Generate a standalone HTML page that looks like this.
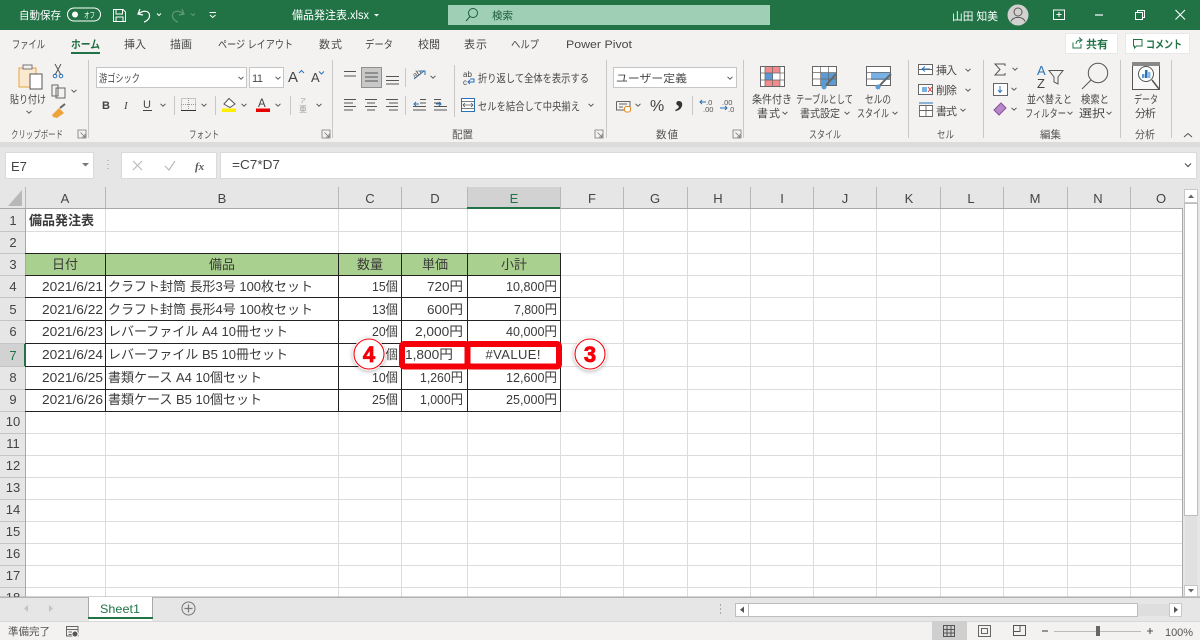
<!DOCTYPE html>
<html lang="ja"><head><meta charset="utf-8"><title>備品発注表.xlsx - Excel</title>
<style>
html,body{margin:0;padding:0;background:#e6e6e6;width:1200px;height:640px;overflow:hidden}
svg{display:block}
text{font-family:"Liberation Sans","Noto Sans CJK JP",sans-serif;fill:#444}
.t{font-size:11px;fill:#484848}
.w{font-size:11px;fill:#fff}
.g{font-size:13px;fill:#3a3a3a}
.m{text-anchor:middle}
.e{text-anchor:end}
.h{font-size:13px;fill:#444;text-anchor:middle}
.l{font-size:10.5px;fill:#555}
</style></head><body>
<svg width="1200" height="640" viewBox="0 0 1200 640" xmlns="http://www.w3.org/2000/svg">
<defs><filter id="s" x="-40%" y="-40%" width="180%" height="180%"><feDropShadow dx="0" dy="1" stdDeviation="2.2" flood-color="#000" flood-opacity=".3"/></filter>
<g id="v"><path d="M-2.500 -1.200L0 1.200L2.500 -1.200" fill="none" stroke="#555" stroke-width="1"/></g>
<g id="lau"><path d="M-4 -4H4V4H-4Z M-1.500 -1.500L3 3M3 0V3H0" fill="none" stroke="#777" stroke-width=".8"/></g>
</defs>
<rect width="1200" height="640" fill="#e6e6e6"/>
<!-- title bar -->
<rect width="1200" height="30" fill="#217346"/>
<text class="w" x="19" y="19" textLength="42" lengthAdjust="spacingAndGlyphs">自動保存</text>
<rect x="67.500" y="8" width="33" height="13" rx="6.500" fill="none" stroke="#fff"/><circle cx="75" cy="14.500" r="3" fill="#fff"/>
<text x="84" y="18" font-size="8" style="fill:#fff" textLength="11" lengthAdjust="spacingAndGlyphs">オフ</text>
<path d="M113.500 9.500H123L125.500 12V21.500H113.500ZM116 9.500V14H122.500V9.500M116 21.500V17H123V21.500" fill="none" stroke="#fff"/>
<path d="M140 9L138 14L143 15M138.500 14C143 10 149 10.500 149.500 15C150 18 147.500 21 144 22" fill="none" stroke="#fff" stroke-width="1.200"/>
<path d="M157 13.500L159 15.500L161 13.500" fill="none" stroke="#fff"/>
<path d="M182 9L184 14L179 15M183.500 14C179 10 173 10.500 172.500 15C172 18 174.500 21 178 22" fill="none" stroke="#5f9a78" stroke-width="1.200"/>
<path d="M191 13.500L193 15.500L195 13.500" fill="none" stroke="#5f9a78"/>
<path d="M209.500 12.500H216M210 15L212.700 17.500L215.500 15" fill="none" stroke="#fff"/>
<text class="w" x="292" y="19" textLength="77" lengthAdjust="spacingAndGlyphs" style="font-size:11.500px">備品発注表.xlsx</text>
<path d="M374 14L376.500 16.500L379 14Z" fill="#fff"/>
<rect x="448" y="5" width="322" height="20" fill="#9fcfb5"/>
<circle cx="473" cy="13" r="4.500" fill="none" stroke="#1c5f3a" stroke-width="1"/><path d="M470 16.500L466 21" stroke="#1c5f3a" stroke-width="1"/>
<text x="492" y="19" font-size="10.500" style="fill:#1c5f3a" textLength="21">検索</text>
<text class="w" x="952" y="20" textLength="46" lengthAdjust="spacingAndGlyphs">山田 知美</text>
<circle cx="1018" cy="15" r="10.500" fill="#d2d1cf"/>
<circle cx="1018" cy="12" r="4" fill="none" stroke="#5a5a5a"/><path d="M1011 21.500C1012.500 16 1023.500 16 1025 21.500" fill="none" stroke="#5a5a5a"/>
<path d="M1053 10H1065M1053.500 10V19.500H1064.500V10M1059 12V17M1056.500 14.500H1061.500" fill="none" stroke="#fff"/>
<path d="M1095 15H1103" stroke="#fff" stroke-width="1.200"/>
<path d="M1135.500 12.500H1142.500V19.500H1135.500ZM1137.500 12.500V10.500H1144.500V17.500H1142.500" fill="none" stroke="#fff"/>
<path d="M1175.500 10L1185 19.500M1185 10L1175.500 19.500" stroke="#fff" stroke-width="1.100"/>
<!-- ribbon -->
<rect y="30" width="1200" height="112" fill="#f3f2f1"/>
<rect y="142" width="1200" height="5" fill="#dcdcdc"/>
<text class="t" x="12" y="48" textLength="33" lengthAdjust="spacingAndGlyphs">ファイル</text>
<text class="t" x="71" y="48" textLength="29" lengthAdjust="spacingAndGlyphs" font-weight="700" style="fill:#1f6e43">ホーム</text>
<rect x="71" y="52" width="29" height="2" fill="#217346"/>
<text class="t" x="124" y="48" textLength="22">挿入</text>
<text class="t" x="170" y="48" textLength="22">描画</text>
<text class="t" x="218" y="48" textLength="75" lengthAdjust="spacingAndGlyphs">ページ レイアウト</text>
<text class="t" x="319" y="48" textLength="23">数式</text>
<text class="t" x="365" y="48" textLength="28" lengthAdjust="spacingAndGlyphs">データ</text>
<text class="t" x="418" y="48" textLength="22">校閲</text>
<text class="t" x="464" y="48" textLength="23">表示</text>
<text class="t" x="511" y="48" textLength="28" lengthAdjust="spacingAndGlyphs">ヘルプ</text>
<text class="t" x="566" y="48" textLength="66" lengthAdjust="spacingAndGlyphs">Power Pivot</text>
<rect x="1065.500" y="33.500" width="52" height="20" fill="#fff" stroke="#e8e8e8"/>
<path d="M1073 42.500V48H1081V44M1076 44C1076 41 1078 40 1081 40M1079 37.500L1082 40L1079 42.500" fill="none" stroke="#217346"/>
<text x="1086" y="48" font-size="11" font-weight="700" style="fill:#217346" textLength="22">共有</text>
<rect x="1125.500" y="33.500" width="64" height="20" fill="#fff" stroke="#e8e8e8"/>
<path d="M1133.500 39.500H1142V46H1136.500L1134.500 48V46H1133.500Z" fill="none" stroke="#217346"/>
<text x="1146" y="48" font-size="11" font-weight="700" style="fill:#217346" textLength="36" lengthAdjust="spacingAndGlyphs">コメント</text>
<!-- separators -->
<path d="M88.500 60V138M332.500 60V138M606.500 60V138M743.500 60V138M908.500 60V138M983.500 60V138M1120.500 60V138M1171.500 60V138M405.500 68V87M405.500 96V115M454.500 65V117M174.500 96V115M215.500 96V115M290.500 96V115M692.500 96V115" stroke="#c8c8c8" fill="none"/>
<!-- clipboard -->
<path d="M19 68H36V87H19Z" fill="#fbe9cf" stroke="#e8a33d"/>
<path d="M23 65H32V69H23Z" fill="#f3f2f1" stroke="#777"/><path d="M30 74H42V89H30Z" fill="#fff" stroke="#555"/>
<text class="t" x="10" y="103" textLength="36" lengthAdjust="spacingAndGlyphs">貼り付け</text><use href="#v" x="29" y="112"/>
<path d="M55 75L61 64M61 75L55 64" stroke="#555" fill="none"/><circle cx="55" cy="76" r="1.800" fill="none" stroke="#2a73b8"/><circle cx="61" cy="76" r="1.800" fill="none" stroke="#2a73b8"/>
<path d="M52 85H58V96H52ZM56 88H65V98H56Z" fill="#f3f2f1" stroke="#666"/><use href="#v" x="74" y="91"/>
<path d="M52 115L59 108L64 113L57 118L53 117Z" fill="#eda23a"/><path d="M60 108L65 104" stroke="#666" stroke-width="2"/>
<text class="l" x="11" y="138" textLength="52" lengthAdjust="spacingAndGlyphs">クリップボード</text><use href="#lau" x="82" y="134"/>
<!-- font -->
<rect x="96.500" y="67.500" width="150" height="20" fill="#fff" stroke="#c6c6c6"/>
<text class="t" x="99" y="82" textLength="41" lengthAdjust="spacingAndGlyphs">游ゴシック</text><use href="#v" x="241" y="78"/>
<rect x="249.500" y="67.500" width="34" height="20" fill="#fff" stroke="#c6c6c6"/>
<text class="t" x="252" y="82" textLength="11">11</text><use href="#v" x="278" y="78"/>
<text x="288" y="82" font-size="15" style="fill:#444">A</text><path d="M299 73L301.500 70.500L304 73" fill="none" stroke="#2a73b8"/>
<text x="311" y="82" font-size="13" style="fill:#444">A</text><path d="M319 71.500L321.500 74L324 71.500" fill="none" stroke="#2a73b8"/>
<text x="102" y="109" font-size="11" font-weight="700" style="fill:#444">B</text>
<text x="124" y="109" font-size="11" font-style="italic" style="font-family:'Liberation Serif',serif;fill:#444">I</text>
<text x="143" y="108" font-size="11" style="fill:#444">U</text><path d="M143 110.500H152" stroke="#444"/><use href="#v" x="163" y="105"/>
<path d="M181.500 98.500H195.500V110.500H181.500Z" fill="none" stroke="#999" stroke-dasharray="1 1"/><path d="M181 110.500H196" stroke="#333"/><path d="M188.500 98V110M181 104.500H196" stroke="#999" stroke-dasharray="1 1"/><use href="#v" x="204" y="105"/>
<path d="M224 104L229 98.500L235 104L230 107.500Z" fill="#fff" stroke="#555"/><rect x="222" y="108.500" width="14" height="3.500" fill="#ffee00"/><use href="#v" x="244" y="105"/>
<text x="258" y="107" font-size="11.500" style="fill:#444">A</text><rect x="256" y="108.500" width="14" height="3.500" fill="#e80000"/><use href="#v" x="278" y="105"/>
<text x="303" y="103" font-size="6" class="m" style="fill:#999">ア</text><text x="303" y="112" font-size="8" class="m" style="fill:#999">亜</text><use href="#v" x="319" y="105"/>
<text class="l" x="189" y="138" textLength="30" lengthAdjust="spacingAndGlyphs">フォント</text><use href="#lau" x="326" y="134"/>
<!-- alignment -->
<path d="M344 71.500H356M344 76H356" stroke="#555"/>
<rect x="361.500" y="67.500" width="20" height="20" fill="#c8c8c8" stroke="#8f8f8f"/><path d="M365 73H378M365 77H378M365 81H378" stroke="#555"/>
<path d="M386 76.500H399M386 80.500H399M386 84H399" stroke="#555"/>
<path d="M344 99.500H356M344 103H353M344 106.500H356M344 110H353" stroke="#555"/>
<path d="M365 99.500H377M367 103H375M365 106.500H377M367 110H375" stroke="#555"/>
<path d="M386 99.500H398M389 103H398M386 106.500H398M389 110H398" stroke="#555"/>
<path d="M414 79L424 71M420 71H425V75" fill="none" stroke="#2a73b8"/><text x="413" y="77" font-size="8" style="fill:#555" transform="rotate(-35 416 75)">ab</text><use href="#v" x="433" y="77"/>
<path d="M420 99.500H426M420 103H426M413 106.500H426M413 110H426" stroke="#555"/><path d="M419 104H414M416 102L414 104L416 106" fill="none" stroke="#2a73b8"/>
<path d="M434 99.500H441M434 103H441M434 106.500H447M434 110H447" stroke="#555"/><path d="M436 104H441M439 102L441 104L439 106" fill="none" stroke="#2a73b8"/>
<text x="463" y="77" font-size="8" style="fill:#444">ab</text><text x="463" y="85" font-size="8" style="fill:#444">c</text><path d="M468 82H474V79H470M470 84L468 82L470 80" fill="none" stroke="#2a73b8"/>
<text class="t" x="478" y="82" textLength="111" lengthAdjust="spacingAndGlyphs">折り返して全体を表示する</text>
<rect x="461.500" y="98.500" width="13" height="13" fill="#fff" stroke="#2a73b8"/><path d="M463 105H473M465 103L463 105L465 107M471 103L473 105L471 107M461 101.500H475M461 108.500H475" fill="none" stroke="#555" stroke-width=".8"/>
<text class="t" x="478" y="110" textLength="102" lengthAdjust="spacingAndGlyphs">セルを結合して中央揃え</text><use href="#v" x="591" y="105"/>
<text class="l" x="452" y="138" textLength="21">配置</text><use href="#lau" x="599" y="134"/>
<!-- number -->
<rect x="613.500" y="67.500" width="123" height="20" fill="#fff" stroke="#c6c6c6"/>
<text class="t" x="616" y="82" textLength="71" lengthAdjust="spacingAndGlyphs">ユーザー定義</text><use href="#v" x="730" y="78"/>
<path d="M616.500 101.500H630V108M616.500 101.500V110H624M619 104H627M619 107H623" fill="none" stroke="#666"/><rect x="624.500" y="106.500" width="6" height="5.500" rx="2" fill="#fff" stroke="#e08a1e"/><use href="#v" x="638" y="105"/>
<text x="650" y="111" font-size="16" style="fill:#444">%</text>
<text x="675" y="106" font-size="34" font-weight="700" style="font-family:'Liberation Serif',serif;fill:#333">,</text>
<path d="M706 102H700M702 100L700 102L702 104" fill="none" stroke="#2a73b8"/><text x="706" y="105" font-size="7.500" style="fill:#555">.0</text><text x="703" y="112" font-size="7.500" style="fill:#555">.00</text>
<text x="722" y="105" font-size="7.500" style="fill:#555">.00</text><path d="M720 108H727M725 106L727 108L725 110" fill="none" stroke="#2a73b8"/><text x="728" y="112" font-size="7.500" style="fill:#555">.0</text>
<text class="l" x="656" y="138" textLength="22">数値</text><use href="#lau" x="737" y="134"/>
<!-- styles -->
<rect x="760.500" y="66.500" width="24" height="20" fill="#fff" stroke="#666"/>
<rect x="765" y="67" width="15" height="6" fill="#f28b8b"/><rect x="765" y="73" width="8" height="7" fill="#5b9bd5"/><rect x="765" y="80" width="15" height="6" fill="#f28b8b"/>
<path d="M765 67V86M772.500 67V86M780 67V86M761 73H784M761 80H784" stroke="#666" stroke-width=".7"/>
<text class="t" x="752" y="103" textLength="40" lengthAdjust="spacingAndGlyphs">条件付き</text><text class="t" x="757" y="117" textLength="23">書式</text><use href="#v" x="785" y="113"/>
<rect x="812.500" y="66.500" width="24" height="19" fill="#fff" stroke="#666"/><rect x="821" y="73" width="15" height="12" fill="#5b9bd5"/><path d="M812 72.500H837M812 79H837M820.500 66V86M828.500 66V86" stroke="#666" stroke-width=".7"/><path d="M824 88L828 83L836 74" stroke="#666" stroke-width="2"/><circle cx="824" cy="87" r="2.500" fill="#5b9bd5"/>
<text class="t" x="796" y="103" textLength="57" lengthAdjust="spacingAndGlyphs">テーブルとして</text><text class="t" x="800" y="117" textLength="40" lengthAdjust="spacingAndGlyphs">書式設定</text><use href="#v" x="847" y="113"/>
<rect x="866.500" y="66.500" width="24" height="19" fill="#fff" stroke="#666"/><rect x="871" y="72" width="19" height="8" fill="#78b1e5"/><path d="M866 72.500H891M866 79H891" stroke="#666" stroke-width=".7"/><path d="M878 88L882 83L891 74" stroke="#666" stroke-width="2"/><circle cx="878" cy="87" r="2.500" fill="#5b9bd5"/>
<text class="t" x="865" y="103" textLength="26" lengthAdjust="spacingAndGlyphs">セルの</text><text class="t" x="857" y="117" textLength="32" lengthAdjust="spacingAndGlyphs">スタイル</text><use href="#v" x="895" y="113"/>
<text class="l" x="809" y="138" textLength="32" lengthAdjust="spacingAndGlyphs">スタイル</text>
<!-- cells -->
<path d="M918.500 64.500H932.500V74.500H918.500ZM918 69.500H933" fill="#fff" stroke="#666"/><path d="M930 69H922M925 66.500L922 69L925 71.500" fill="none" stroke="#2a73b8"/>
<text class="t" x="936" y="74" textLength="21">挿入</text><use href="#v" x="968" y="70"/>
<path d="M918.500 84.500H932.500V94.500H918.500Z" fill="#fff" stroke="#666"/><rect x="922" y="87" width="5" height="5" fill="#78b1e5"/><path d="M928 87L932 92M932 87L928 92" stroke="#d33"/>
<text class="t" x="936" y="94" textLength="21">削除</text><use href="#v" x="968" y="90"/>
<path d="M919.500 105.500H932.500V116.500H919.500ZM919 110.500H933M926 105V117" fill="#fff" stroke="#666" stroke-width=".9"/><path d="M919 103H933" stroke="#2a73b8"/>
<text class="t" x="936" y="115" textLength="21">書式</text><use href="#v" x="963" y="110"/>
<text class="l" x="937" y="138" textLength="17" lengthAdjust="spacingAndGlyphs">セル</text>
<!-- editing -->
<path d="M1005 66V64H995L1000 69.500L995 75H1005V73" fill="none" stroke="#555"/><use href="#v" x="1015" y="69"/>
<rect x="993.500" y="83.500" width="14" height="12" fill="#fff" stroke="#666"/><path d="M1000 86V92M998 90L1000 92.500L1002 90" fill="none" stroke="#2a73b8"/><use href="#v" x="1014" y="89"/>
<path d="M994 110L1001 103L1006 108L999 115Z" fill="#b788c8" stroke="#8a4da0"/><use href="#v" x="1014" y="109"/>
<text x="1037" y="75" font-size="13" style="fill:#2a73b8">A</text><text x="1037" y="88" font-size="13" style="fill:#444">Z</text>
<path d="M1049 70.500H1063L1058 77V84L1054 82V77Z" fill="none" stroke="#555"/>
<text class="t" x="1027" y="103" textLength="45" lengthAdjust="spacingAndGlyphs">並べ替えと</text><text class="t" x="1025" y="117" textLength="41" lengthAdjust="spacingAndGlyphs">フィルター</text><use href="#v" x="1070" y="113"/>
<circle cx="1098" cy="73" r="9.700" fill="none" stroke="#555"/><path d="M1091 80L1082 89" stroke="#555"/>
<text class="t" x="1081" y="103" textLength="28" lengthAdjust="spacingAndGlyphs">検索と</text><text class="t" x="1079" y="117" textLength="26" lengthAdjust="spacingAndGlyphs">選択</text><use href="#v" x="1109" y="113"/>
<text class="l" x="1040" y="138" textLength="21">編集</text>
<!-- analysis -->
<rect x="1132.500" y="62.500" width="27" height="27" fill="#f8f8f8" stroke="#555"/><rect x="1132" y="62" width="28" height="4" fill="#888"/>
<circle cx="1146" cy="74" r="7.500" fill="#fff" stroke="#555"/><rect x="1142" y="74" width="2.500" height="4" fill="#5b9bd5"/><rect x="1145" y="70" width="2.500" height="8" fill="#2a73b8"/><rect x="1148" y="72" width="2.500" height="6" fill="#8cb8e0"/><path d="M1152 80L1159 89" stroke="#555" stroke-width="1.500"/>
<text class="t" x="1134" y="103" textLength="24" lengthAdjust="spacingAndGlyphs">データ</text><text class="t" x="1135" y="117" textLength="21">分析</text>
<text class="l" x="1135" y="138" textLength="20" lengthAdjust="spacingAndGlyphs">分析</text>
<path d="M1184 137L1188 133.500L1192 137" fill="none" stroke="#555"/>
<!-- formula bar -->
<rect x="5.500" y="152.500" width="88" height="26" fill="#fff" stroke="#dadada"/>
<text x="11" y="171" font-size="13" style="fill:#444">E7</text>
<path d="M82 163H89L85.500 166.500Z" fill="#777"/>
<path d="M108 160V161M108 164V165M108 168V169" stroke="#999"/>
<rect x="121.500" y="152.500" width="95" height="26" fill="#fff" stroke="#dadada"/>
<path d="M133 161L142 170M142 161L133 170" stroke="#bbb" stroke-width="1.200"/><path d="M165 166L169 170L175 161" fill="none" stroke="#bbb" stroke-width="1.200"/>
<text x="195" y="170" font-size="11" font-style="italic" style="font-family:'Liberation Serif',serif;fill:#555" font-weight="700">fx</text>
<rect x="220.500" y="152.500" width="976" height="26" fill="#fff" stroke="#dadada"/>
<text x="232" y="169" font-size="13" style="fill:#444" textLength="48" lengthAdjust="spacingAndGlyphs">=C7*D7</text>
<path d="M1185 163.500L1188 166.500L1191 163.500" fill="none" stroke="#555" stroke-width="1.200"/>
<!-- grid -->
<rect x="25" y="209" width="1157" height="388" fill="#fff"/>
<rect x="467" y="187" width="93" height="21" fill="#d2d2d2"/>
<rect x="0" y="344" width="25" height="22" fill="#d2d2d2"/>
<path d="M8 206H22V190Z" fill="#b8b8b8"/>
<g stroke="#dcdcdc" fill="none">
<path d="M105.500 209V597M338.500 209V597M401.500 209V597M467.500 209V597M560.500 209V597M623.500 209V597M687.500 209V597M750.500 209V597M813.500 209V597M876.500 209V597M940.500 209V597M1003.500 209V597M1067.500 209V597M1130.500 209V597"/>
<path d="M25 231.500H1182M25 253.500H1182M25 275.500H1182M25 297.500H1182M25 320.500H1182M25 343.500H1182M25 366.500H1182M25 389.500H1182M25 411.500H1182M25 433.500H1182M25 455.500H1182M25 477.500H1182M25 499.500H1182M25 521.500H1182M25 543.500H1182M25 565.500H1182M25 587.500H1182"/>
</g>
<g stroke="#c4c4c4" fill="none">
<path d="M0 231.500H25M0 253.500H25M0 275.500H25M0 297.500H25M0 320.500H25M0 343.500H25M0 366.500H25M0 389.500H25M0 411.500H25M0 433.500H25M0 455.500H25M0 477.500H25M0 499.500H25M0 521.500H25M0 543.500H25M0 565.500H25M0 587.500H25"/>
<path d="M25.500 187V208M105.500 187V208M338.500 187V208M401.500 187V208M467.500 187V208M560.500 187V208M623.500 187V208M687.500 187V208M750.500 187V208M813.500 187V208M876.500 187V208M940.500 187V208M1003.500 187V208M1067.500 187V208M1130.500 187V208" stroke="#b8b8b8"/>
</g>
<path d="M0 208.500H1182M25.500 208V597M1182.500 208V597M0 597H1200" stroke="#a8a8a8" fill="none"/>
<rect x="467" y="207" width="93" height="2" fill="#217346"/><rect x="24" y="344" width="2" height="22" fill="#217346"/>
<!-- headers -->
<text class="h" x="65" y="203">A</text><text class="h" x="222" y="203">B</text><text class="h" x="370" y="203">C</text><text class="h" x="435" y="203">D</text><text class="h" x="514" y="203" style="fill:#217346">E</text><text class="h" x="592" y="203">F</text><text class="h" x="655" y="203">G</text><text class="h" x="718" y="203">H</text><text class="h" x="782" y="203">I</text><text class="h" x="845" y="203">J</text><text class="h" x="909" y="203">K</text><text class="h" x="971" y="203">L</text><text class="h" x="1035" y="203">M</text><text class="h" x="1098" y="203">N</text><text class="h" x="1161" y="203">O</text>
<text class="h" x="13" y="225">1</text><text class="h" x="13" y="247">2</text><text class="h" x="13" y="269">3</text><text class="h" x="13" y="291">4</text><text class="h" x="13" y="314">5</text><text class="h" x="13" y="336">6</text><text class="h" x="13" y="360" style="fill:#217346">7</text><text class="h" x="13" y="382">8</text><text class="h" x="13" y="404">9</text><text class="h" x="13" y="426">10</text><text class="h" x="13" y="448">11</text><text class="h" x="13" y="470">12</text><text class="h" x="13" y="492">13</text><text class="h" x="13" y="514">14</text><text class="h" x="13" y="536">15</text><text class="h" x="13" y="558">16</text><text class="h" x="13" y="580">17</text><text class="h" x="13" y="602">18</text>
<rect x="0" y="597" width="1200" height="43" fill="#e6e6e6"/>
<path d="M0 597.500H1200" stroke="#b4b4b4"/>
<!-- table -->
<rect x="26" y="254" width="534" height="21" fill="#a9d08e"/>
<g stroke="#222" fill="none">
<path d="M25 253.500H561M25 275.500H561M25 297.500H561M25 320.500H561M25 343.500H561M25 366.500H561M25 389.500H561M25 411.500H561"/>
<path d="M105.500 253V412M338.500 253V412M401.500 253V412M467.500 253V412M560.500 253V412"/>
</g>
<text class="g" x="29" y="225" font-weight="700" textLength="65">備品発注表</text>
<text class="g m" x="65" y="269" textLength="26">日付</text><text class="g m" x="222" y="269" textLength="26">備品</text><text class="g m" x="370" y="269" textLength="26">数量</text><text class="g m" x="435" y="269" textLength="26">単価</text><text class="g m" x="514" y="269" textLength="26">小計</text>
<text class="g e" x="103" y="291" textLength="61" lengthAdjust="spacingAndGlyphs">2021/6/21</text><text class="g e" x="103" y="314" textLength="61" lengthAdjust="spacingAndGlyphs">2021/6/22</text><text class="g e" x="103" y="336" textLength="61" lengthAdjust="spacingAndGlyphs">2021/6/23</text><text class="g e" x="103" y="359" textLength="61" lengthAdjust="spacingAndGlyphs">2021/6/24</text><text class="g e" x="103" y="382" textLength="61" lengthAdjust="spacingAndGlyphs">2021/6/25</text><text class="g e" x="103" y="404" textLength="61" lengthAdjust="spacingAndGlyphs">2021/6/26</text>
<text class="g" x="108" y="291" textLength="205">クラフト封筒 長形3号 100枚セット</text>
<text class="g" x="108" y="314" textLength="205">クラフト封筒 長形4号 100枚セット</text>
<text class="g" x="108" y="336" textLength="180">レバーファイル A4 10冊セット</text>
<text class="g" x="108" y="359" textLength="180">レバーファイル B5 10冊セット</text>
<text class="g" x="108" y="382" textLength="154">書類ケース A4 10個セット</text>
<text class="g" x="108" y="404" textLength="154">書類ケース B5 10個セット</text>
<text class="g e" x="398" y="291" textLength="26" lengthAdjust="spacingAndGlyphs">15個</text><text class="g e" x="398" y="314" textLength="26" lengthAdjust="spacingAndGlyphs">13個</text><text class="g e" x="398" y="336" textLength="26" lengthAdjust="spacingAndGlyphs">20個</text><text class="g e" x="398" y="359" textLength="26" lengthAdjust="spacingAndGlyphs">18個</text><text class="g e" x="398" y="382" textLength="26" lengthAdjust="spacingAndGlyphs">10個</text><text class="g e" x="398" y="404" textLength="26" lengthAdjust="spacingAndGlyphs">25個</text>
<text class="g e" x="463" y="291" textLength="36" lengthAdjust="spacingAndGlyphs">720円</text><text class="g e" x="463" y="314" textLength="36" lengthAdjust="spacingAndGlyphs">600円</text><text class="g e" x="463" y="336" textLength="48" lengthAdjust="spacingAndGlyphs">2,000円</text><text class="g e" x="463" y="382" textLength="43" lengthAdjust="spacingAndGlyphs">1,260円</text><text class="g e" x="463" y="404" textLength="43" lengthAdjust="spacingAndGlyphs">1,000円</text>
<text class="g e" x="557" y="291" textLength="51" lengthAdjust="spacingAndGlyphs">10,800円</text><text class="g e" x="557" y="314" textLength="43" lengthAdjust="spacingAndGlyphs">7,800円</text><text class="g e" x="557" y="336" textLength="51" lengthAdjust="spacingAndGlyphs">40,000円</text><text class="g e" x="557" y="382" textLength="51" lengthAdjust="spacingAndGlyphs">12,600円</text><text class="g e" x="557" y="404" textLength="51" lengthAdjust="spacingAndGlyphs">25,000円</text>
<!-- red highlights -->
<rect x="402" y="344" width="65.500" height="22.500" rx="2" fill="#fff" stroke="#f5000a" stroke-width="6"/>
<rect x="467.500" y="344" width="91.500" height="22.500" rx="2" fill="#fff" stroke="#f5000a" stroke-width="6"/>
<text class="g" x="405" y="359" textLength="48" lengthAdjust="spacingAndGlyphs">1,800円</text>
<text class="g m" x="513" y="359" textLength="55">#VALUE!</text>
<!-- callouts -->
<g filter="url(#s)"><circle cx="369" cy="354" r="16.500" fill="#fff"/></g>
<circle cx="369" cy="354" r="15" fill="#fff" stroke="#f5000a" stroke-width="1.100"/>
<text x="369" y="362" font-size="22" font-weight="700" class="m" style="fill:#f5000a;stroke:#f5000a;stroke-width:.8">4</text>
<g filter="url(#s)"><circle cx="590" cy="354" r="16.500" fill="#fff"/></g>
<circle cx="590" cy="354" r="15" fill="#fff" stroke="#f5000a" stroke-width="1.100"/>
<text x="590" y="362" font-size="22" font-weight="700" class="m" style="fill:#f5000a;stroke:#f5000a;stroke-width:.8">3</text>
<!-- vertical scrollbar -->
<rect x="1184.500" y="189.500" width="13" height="407" fill="#e0e0e0" stroke="#e6e6e6"/>
<rect x="1184.500" y="203.500" width="13" height="312" fill="#fff" stroke="#bdbdbd"/>
<rect x="1184.500" y="189.500" width="13" height="13" fill="#fff" stroke="#c8c8c8"/><path d="M1188 198H1194L1191 194.500Z" fill="#666"/>
<rect x="1184.500" y="585.500" width="13" height="11" fill="#fff" stroke="#c8c8c8"/><path d="M1188 589H1194L1191 592.500Z" fill="#666"/>
<!-- tabs -->
<rect x="89" y="597" width="63" height="24" fill="#fff"/>
<path d="M88.500 597V617M152.500 597V617" stroke="#a8a8a8"/>
<rect x="88" y="617" width="65" height="2" fill="#217346"/>
<text x="100" y="613" font-size="12" style="fill:#217346" textLength="40" lengthAdjust="spacingAndGlyphs">Sheet1</text>
<path d="M28 605V612L24 608.500ZM49 605V612L53 608.500Z" fill="#c4c4c4"/>
<circle cx="188.500" cy="608.500" r="6.500" fill="none" stroke="#777"/><path d="M188.500 604.500V612.500M184.500 608.500H192.500" stroke="#777" stroke-width="1.200"/>
<path d="M720.500 604V606M720.500 608V610M720.500 612V614" stroke="#aaa"/>
<rect x="735.500" y="603.500" width="13" height="13" fill="#fff" stroke="#bdbdbd"/><path d="M744 606.500V613L740 609.800Z" fill="#555"/>
<rect x="748.500" y="603.500" width="389" height="13" fill="#fff" stroke="#bdbdbd"/>
<rect x="1138" y="604" width="31" height="12" fill="#dedede"/>
<rect x="1169.500" y="603.500" width="12" height="13" fill="#fff" stroke="#c8c8c8"/><path d="M1174 606.500V613L1178 609.800Z" fill="#555"/>
<!-- status bar -->
<rect y="621" width="1200" height="19" fill="#f3f2f1"/>
<path d="M0 621.500H1200" stroke="#d8d8d8"/>
<text x="8" y="635" font-size="10.500" style="fill:#555" textLength="42">準備完了</text>
<path d="M66.500 626.500H78V636H66.500ZM66.500 629.500H78M68.500 632H72M68.500 634.500H72" fill="none" stroke="#666"/><circle cx="75" cy="634" r="3" fill="#555" stroke="#f3f2f1"/>
<rect x="932" y="621" width="35" height="19" fill="#cfcfcf"/>
<path d="M943.500 625.500H954.500V636.500H943.500ZM947 625.500V636.500M951 625.500V636.500M943.500 629.500H954.500M943.500 633H954.500" fill="none" stroke="#555"/>
<path d="M978.500 625.500H990.500V636.500H978.500ZM981.500 628.500H987.500V633.500H981.500Z" fill="none" stroke="#666"/>
<path d="M1013.500 625.500H1025.500V635.500H1013.500ZM1020 625.500V631.500H1013.500" fill="none" stroke="#555"/>
<path d="M1042 631H1048" stroke="#555" stroke-width="1.200"/>
<path d="M1054 631.500H1141" stroke="#bbb"/><rect x="1096" y="626" width="4" height="10" fill="#666"/>
<path d="M1147 631H1153M1150 628V634" stroke="#555" stroke-width="1.100"/>
<text x="1165" y="636" font-size="11" style="fill:#555" textLength="28">100%</text>
</svg>
</body></html>
